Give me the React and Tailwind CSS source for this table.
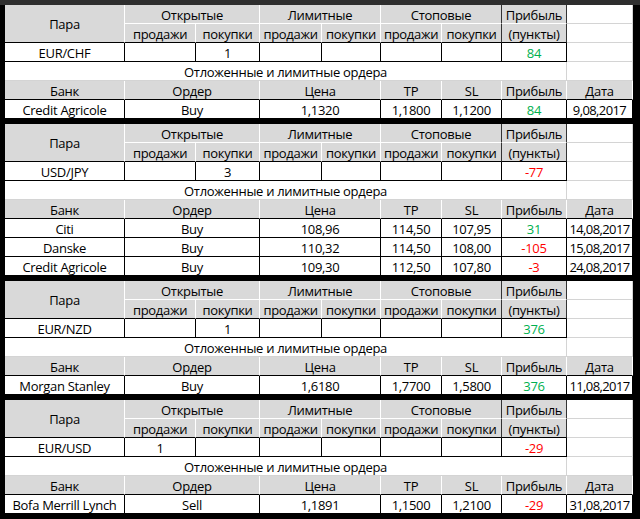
import React from 'react'

const GREEN = 'text-[#00b050]'
const RED = 'text-[#ff0000]'

const blocks = [
    {
        pair: 'EUR/CHF',
        sell: '',
        buy: '1',
        profit: '84',
        orders: [
            { bank: 'Credit Agricole', order: 'Buy', price: '1,1320', tp: '1,1800', sl: '1,1200', profit: '84', date: '9,08,2017' },
        ],
    },
    {
        pair: 'USD/JPY',
        sell: '',
        buy: '3',
        profit: '-77',
        orders: [
            { bank: 'Citi', order: 'Buy', price: '108,96', tp: '114,50', sl: '107,95', profit: '31', date: '14,08,2017' },
            { bank: 'Danske', order: 'Buy', price: '110,32', tp: '114,50', sl: '108,00', profit: '-105', date: '15,08,2017' },
            { bank: 'Credit Agricole', order: 'Buy', price: '109,30', tp: '112,50', sl: '107,80', profit: '-3', date: '24,08,2017' },
        ],
    },
    {
        pair: 'EUR/NZD',
        sell: '',
        buy: '1',
        profit: '376',
        orders: [
            { bank: 'Morgan Stanley', order: 'Buy', price: '1,6180', tp: '1,7700', sl: '1,5800', profit: '376', date: '11,08,2017' },
        ],
    },
    {
        pair: 'EUR/USD',
        sell: '1',
        buy: '',
        profit: '-29',
        orders: [
            { bank: 'Bofa Merrill Lynch', order: 'Sell', price: '1,1891', tp: '1,1500', sl: '1,2100', profit: '-29', date: '31,08,2017' },
        ],
    },
]

const tone = (v) => (v.startsWith('-') ? RED : GREEN)

// one spreadsheet cell, text centred a touch low like Excel does
const Cell = ({ children, className = '' }) => (
    <div className={`flex items-center justify-center pt-[2px] leading-[19px] whitespace-nowrap ${className}`}>
        {children}
    </div>
)

// gray header cells: white separators
const hd = 'bg-[#d9d9d9] border-r border-b border-r-white border-b-white'
// white data cells: black grid
const dt = 'bg-white border-r border-b border-black'
// empty excel area: light gridlines
const gl = 'bg-white border-r border-b border-[#d4d4d4]'

const Block = ({ b }) => (
    <div className="grid grid-cols-[120px_71px_64px_62px_59px_61px_60px_65px_66px] auto-rows-[19px]">
        {/* header row 1 */}
        <Cell className={`${hd} row-span-2 !border-b-black`}>Пара</Cell>
        <Cell className={`${hd} col-span-2`}>Открытые</Cell>
        <Cell className={`${hd} col-span-2`}>Лимитные</Cell>
        <Cell className={`${hd} col-span-2 !border-r-[#333]`}>Стоповые</Cell>
        <Cell className={`${hd} !border-r-[#333]`}>Прибыль</Cell>
        <Cell className={gl}></Cell>

        {/* header row 2 */}
        <Cell className={`${hd} !border-b-black`}>продажи</Cell>
        <Cell className={`${hd} !border-b-black`}>покупки</Cell>
        <Cell className={`${hd} !border-b-black`}>продажи</Cell>
        <Cell className={`${hd} !border-b-black`}>покупки</Cell>
        <Cell className={`${hd} !border-b-black`}>продажи</Cell>
        <Cell className={`${hd} !border-b-black !border-r-[#333]`}>покупки</Cell>
        <Cell className={`${hd} !border-b-black !border-r-[#333]`}>(пункты)</Cell>
        <Cell className={gl}></Cell>

        {/* pair row */}
        <Cell className={dt}>{b.pair}</Cell>
        <Cell className={dt}>{b.sell}</Cell>
        <Cell className={dt}>{b.buy}</Cell>
        <Cell className={dt}></Cell>
        <Cell className={dt}></Cell>
        <Cell className={dt}></Cell>
        <Cell className={dt}></Cell>
        <Cell className={`${dt} ${tone(b.profit)}`}>{b.profit}</Cell>
        <Cell className={gl}></Cell>

        <Cell className={`${gl} col-span-8`}>Отложенные и лимитные ордера</Cell>
        <Cell className={gl}></Cell>

        {/* orders header */}
        <Cell className={`${hd} !border-b-black`}>Банк</Cell>
        <Cell className={`${hd} !border-b-black col-span-2`}>Ордер</Cell>
        <Cell className={`${hd} !border-b-black col-span-2`}>Цена</Cell>
        <Cell className={`${hd} !border-b-black`}>TP</Cell>
        <Cell className={`${hd} !border-b-black`}>SL</Cell>
        <Cell className={`${hd} !border-b-black`}>Прибыль</Cell>
        <Cell className={`${hd} !border-b-black`}>Дата</Cell>

        {b.orders.map((o, i) => (
            <React.Fragment key={i}>
                <Cell className={dt}>{o.bank}</Cell>
                <Cell className={`${dt} col-span-2`}>{o.order}</Cell>
                <Cell className={`${dt} col-span-2`}>{o.price}</Cell>
                <Cell className={dt}>{o.tp}</Cell>
                <Cell className={dt}>{o.sl}</Cell>
                <Cell className={`${dt} ${tone(o.profit)}`}>{o.profit}</Cell>
                <Cell className={`${dt} tracking-[-0.6px]`}>{o.date}</Cell>
            </React.Fragment>
        ))}
    </div>
)

export default function App() {
    return (
        <div className="w-[640px] h-[519px] bg-black overflow-hidden text-[13px] font-medium tracking-[-0.3px] text-black font-['Open_Sans','Noto_Sans',sans-serif]">
            <div className="h-[5px] bg-[#2e2e2e]"></div>
            <div className="flex flex-col gap-[5px] pl-[5px] pr-[7px]">
                {blocks.map((b) => (
                    <Block key={b.pair} b={b} />
                ))}
            </div>
        </div>
    )
}
